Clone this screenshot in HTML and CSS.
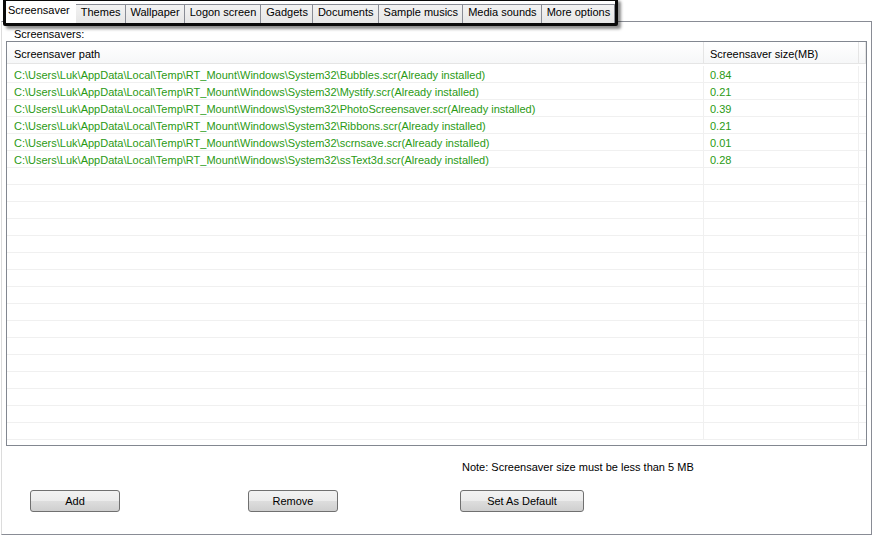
FILE: index.html
```
<!DOCTYPE html>
<html lang="en">
<head>
    <meta charset="UTF-8">
    <title>Screensaver</title>
    <link rel="stylesheet" href="styles.css">
</head>
<body>
    <div class="window">
        <div class="tabs">
            <div class="tab active">Screensaver</div>
            <div class="tab">Themes</div>
            <div class="tab">Wallpaper</div>
            <div class="tab">Logon screen</div>
            <div class="tab">Gadgets</div>
            <div class="tab">Documents</div>
            <div class="tab">Sample musics</div>
            <div class="tab">Media sounds</div>
            <div class="tab">More options</div>
        </div>

        <div class="panel">
            <div class="group-label">Screensavers:</div>

            <div class="listview">
                <div class="lv-header">
                    <div class="lv-col">Screensaver path</div>
                    <div class="lv-col size">Screensaver size(MB)</div>
                    <div class="lv-col filler"></div>
                </div>
                <div class="lv-body" id="lv-body">
                    <!-- rows are added by the script below -->
                </div>
            </div>

            <div class="footer">
                <div class="note">Note: Screensaver size must be less than 5 MB</div>
                <button class="btn btn-add">Add</button>
                <button class="btn btn-remove">Remove</button>
                <button class="btn btn-default">Set As Default</button>
            </div>
        </div>
    </div>

    <script>
        const base = 'C:\\Users\\Luk\\AppData\\Local\\Temp\\RT_Mount\\Windows\\System32\\';
        const items = [
            ['Bubbles.scr', '0.84'],
            ['Mystify.scr', '0.21'],
            ['PhotoScreensaver.scr', '0.39'],
            ['Ribbons.scr', '0.21'],
            ['scrnsave.scr', '0.01'],
            ['ssText3d.scr', '0.28']
        ];
        const body = document.getElementById('lv-body');
        for (let i = 0; i < 22; i++) {
            const row = document.createElement('div');
            row.className = 'lv-row';
            const item = items[i];
            const cols = item ? [base + item[0] + '(Already installed)', item[1], ''] : ['', '', ''];
            cols.forEach((text, n) => {
                const cell = document.createElement('div');
                cell.className = 'lv-cell' + (n === 1 ? ' size' : '') + (n === 2 ? ' filler' : '');
                cell.textContent = text;
                row.appendChild(cell);
            });
            body.appendChild(row);
        }
    </script>
</body>
</html>
```

FILE: styles.css
```
:root {
    --border-dark: #898c95;
    --list-border: #828790;
    --grid-line: #f0f0f0;
    --green: #2a9a14;
}

body {
    margin: 0;
    font-family: 'Liberation Sans', Arial, sans-serif;
    font-size: 11px;
    color: #000;
    background: #fff;
}

.window {
    width: 875px;
    height: 536px;
    overflow: hidden;
}

/* tab strip with the black highlight frame */
.tabs {
    position: relative;
    z-index: 1;
    display: inline-flex;
    align-items: flex-end;
    height: 22px;
    margin: -2px 0 0 3px;
    border: 3px solid #0a0a0a;
    border-radius: 2px;
    background: #fff;
    box-shadow: 3px 3px 3px rgba(0, 0, 0, 0.45);
}

.tab {
    height: 18px;
    line-height: 15px;
    padding: 0 4px 0 5px;
    border: 1px solid var(--border-dark);
    border-left: none;
    border-bottom: none;
    background: linear-gradient(#f3f3f3, #e6e6e6);
    white-space: nowrap;
}

.tab.active {
    height: 22px;
    line-height: 18px;
    padding: 0 6px 0 2px;
    border: none;
    background: #fff;
}

.panel {
    margin: -5px 0 0 1px;
    width: 869px;
    height: 512px;
    border: 1px solid var(--border-dark);
    border-left-color: #dcdcdc;
}

.group-label {
    padding: 5px 0 0 12px;
    height: 14px;
    line-height: 14px;
}

.listview {
    margin: 0 0 0 4px;
    width: 859px;
    height: 403px;
    border: 1px solid var(--list-border);
    overflow: hidden;
}

.lv-header,
.lv-row {
    display: grid;
    grid-template-columns: 697px 155px 7px;
}

.lv-header {
    height: 21px;
    border-bottom: 1px solid #e5e5e5;
    background: linear-gradient(#fff, #f6f7f8);
}

.lv-col {
    padding: 3px 0 0 7px;
    line-height: 18px;
    border-right: 1px solid #e5e5e5;
}

.lv-col.size {
    padding-left: 6px;
}

.lv-col.filler {
    padding: 0;
}

.lv-body {
    padding-top: 2px;
}

.lv-row {
    height: 16px;
    border-bottom: 1px solid var(--grid-line);
    color: var(--green);
}

.lv-cell {
    padding: 3px 0 0 7px;
    line-height: 13px;
    border-right: 1px solid var(--grid-line);
    white-space: nowrap;
    overflow: hidden;
}

.lv-cell.size {
    padding-left: 6px;
}

.lv-cell.filler {
    padding: 0;
    border-right: none;
}

.footer {
    display: grid;
    grid-template-columns: 218px 212px auto;
    padding: 14px 0 0 28px;
}

.note {
    grid-column: 3;
    padding-left: 2px;
    height: 16px;
    line-height: 14px;
    margin-bottom: 14px;
}

.btn {
    grid-row: 2;
    height: 22px;
    padding: 0;
    font-family: inherit;
    font-size: 11px;
    color: #000;
    border: 1px solid #707070;
    border-radius: 3px;
    background: linear-gradient(#f2f2f2 0%, #ebebeb 50%, #dddddd 51%, #cfcfcf 100%);
}

.btn-add,
.btn-remove {
    width: 90px;
}

.btn-default {
    width: 124px;
}
```
